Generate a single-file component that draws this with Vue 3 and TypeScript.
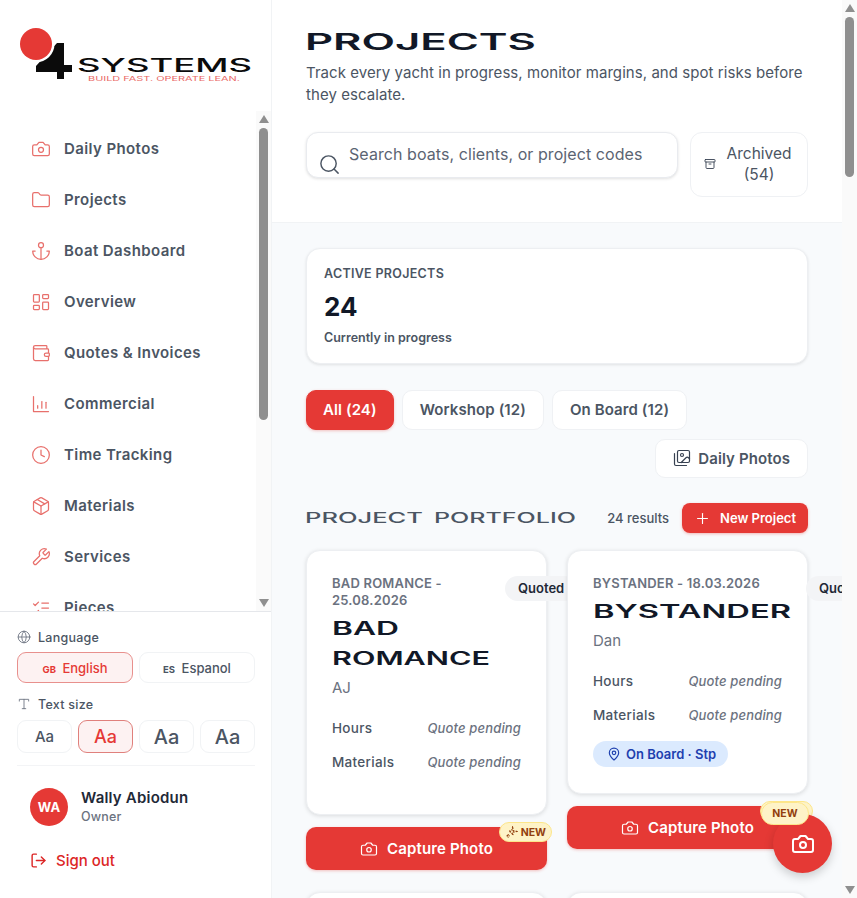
<template>
  <div class="app-shell">
    <aside class="sidebar">
      <div class="logo">
        <svg width="240" height="64" viewBox="0 0 240 64">
          <path d="M41 17h7v22h8v7h-8v7h-7v-7H20v-6z" fill="#0b0b0b" />
          <circle cx="20" cy="18" r="18.5" fill="#fff" />
          <circle cx="20" cy="18" r="16" fill="#e53935" />
          <text x="61" y="46" class="logo-name" textLength="175" lengthAdjust="spacingAndGlyphs">SYSTEMS</text>
          <text x="72" y="55" class="logo-tag" textLength="152" lengthAdjust="spacingAndGlyphs">BUILD FAST. OPERATE LEAN.</text>
        </svg>
      </div>

      <div class="nav-wrap">
        <nav class="nav">
          <a v-for="item in navItems" :key="item.label" class="nav-item">
            <svg class="nav-icon" viewBox="0 0 24 24" v-html="icons[item.icon]"></svg>
            <span>{{ item.label }}</span>
          </a>
        </nav>
        <div class="scrollbar">
          <i class="sb-up"></i>
          <div class="sb-thumb" :style="{ height: navThumb + 'px' }"></div>
          <div class="sb-rest"></div>
          <i class="sb-down"></i>
        </div>
      </div>

      <div class="side-footer">
        <div class="pref-label">
          <svg class="pref-icon" viewBox="0 0 24 24" v-html="icons.globe"></svg>
          Language
        </div>
        <div class="lang-row">
          <button class="lang-btn active"><small>GB</small> English</button>
          <button class="lang-btn"><small>ES</small> Espanol</button>
        </div>
        <div class="pref-label size-label">
          <svg class="pref-icon" viewBox="0 0 24 24" v-html="icons.type"></svg>
          Text size
        </div>
        <div class="size-row">
          <button
            v-for="(size, i) in textSizes"
            :key="size + '-' + i"
            class="size-btn"
            :class="{ active: i === 1 }"
            :style="{ fontSize: size + 'px' }"
          >
            Aa
          </button>
        </div>
        <div class="user-row">
          <div class="avatar">WA</div>
          <div>
            <div class="user-name">Wally Abiodun</div>
            <div class="user-role">Owner</div>
          </div>
        </div>
        <a class="sign-out">
          <svg class="signout-icon" viewBox="0 0 24 24" v-html="icons.logout"></svg>
          Sign out
        </a>
      </div>
    </aside>

    <div class="main-wrap">
      <main class="main">
        <header class="page-head">
          <h1 class="page-title">
            <svg width="232" height="20" viewBox="0 0 232 20">
              <text x="0" y="17.5" textLength="231" lengthAdjust="spacingAndGlyphs">PROJECTS</text>
            </svg>
          </h1>
          <p class="page-sub">Track every yacht in progress, monitor margins, and spot risks before they escalate.</p>
          <div class="search-row">
            <label class="search">
              <svg class="search-icon" viewBox="0 0 24 24" v-html="icons.search"></svg>
              <input type="text" placeholder="Search boats, clients, or project codes" />
            </label>
            <button class="archived">
              <svg class="archive-icon" viewBox="0 0 24 24" v-html="icons.archive"></svg>
              <span>Archived (54)</span>
            </button>
          </div>
        </header>

        <div class="content">
          <section class="stat-card">
            <div class="stat-label">ACTIVE PROJECTS</div>
            <div class="stat-value">24</div>
            <div class="stat-note">Currently in progress</div>
          </section>

          <div class="filters">
            <button class="chip active">All (24)</button>
            <button class="chip">Workshop (12)</button>
            <button class="chip">On Board (12)</button>
            <button class="chip photos-chip">
              <svg class="chip-icon" viewBox="0 0 24 24" v-html="icons.images"></svg>
              Daily Photos
            </button>
          </div>

          <div class="section-head">
            <h2 class="section-title">
              <svg width="272" height="14" viewBox="0 0 272 14">
                <text x="0" y="12" textLength="118" lengthAdjust="spacingAndGlyphs">PROJECT</text>
                <text x="129" y="12" textLength="142" lengthAdjust="spacingAndGlyphs">PORTFOLIO</text>
              </svg>
            </h2>
            <div class="section-actions">
              <span class="results">24 results</span>
              <button class="new-btn">
                <svg class="plus-icon" viewBox="0 0 24 24" v-html="icons.plus"></svg>
                New Project
              </button>
            </div>
          </div>

          <div class="grid">
            <div v-for="p in projects" :key="p.code" class="grid-cell">
              <article class="card">
                <div class="card-top">
                  <div>
                    <div class="card-code">{{ p.code }}</div>
                    <h3 class="card-title">
                      <svg
                        v-for="line in p.title"
                        :key="line.text"
                        class="title-line"
                        :width="line.width"
                        height="15"
                        :viewBox="`0 0 ${line.width} 15`"
                      >
                        <text x="0" y="14" :textLength="line.width" lengthAdjust="spacingAndGlyphs">{{ line.text }}</text>
                      </svg>
                    </h3>
                  </div>
                  <span class="status">Quoted</span>
                </div>
                <div class="client">{{ p.client }}</div>
                <div class="metrics">
                  <div class="metric"><span>Hours</span><em>Quote pending</em></div>
                  <div class="metric"><span>Materials</span><em>Quote pending</em></div>
                </div>
                <span v-if="p.place" class="place">
                  <svg class="place-icon" viewBox="0 0 24 24" v-html="icons.pin"></svg>
                  {{ p.place }}
                </span>
              </article>
              <div class="capture-wrap">
                <button class="capture">
                  <svg class="capture-icon" viewBox="0 0 24 24" v-html="icons.camera"></svg>
                  Capture Photo
                </button>
                <span class="new-badge">
                  <svg class="spark" viewBox="0 0 24 24" v-html="icons.sparkle"></svg>
                  NEW
                </span>
              </div>
            </div>
            <!-- next row, only its top edge is on screen -->
            <div class="card card-stub"></div>
            <div class="card card-stub"></div>
          </div>
        </div>
      </main>
      <div class="scrollbar">
        <i class="sb-up"></i>
        <div class="sb-thumb" :style="{ height: mainThumb + 'px' }"></div>
        <div class="sb-rest"></div>
        <i class="sb-down"></i>
      </div>
    </div>

    <button class="fab" aria-label="Capture photo">
      <svg class="fab-icon" viewBox="0 0 24 24" v-html="icons.camera"></svg>
      <span class="fab-badge">NEW</span>
    </button>
  </div>
</template>

<script setup lang="ts">
interface TitleLine {
  text: string
  width: number
}

interface Project {
  code: string
  title: TitleLine[]
  client: string
  place?: string
}

const icons: Record<string, string> = {
  camera: '<path d="M14.5 4h-5L7 7H4a2 2 0 0 0-2 2v9a2 2 0 0 0 2 2h16a2 2 0 0 0 2-2V9a2 2 0 0 0-2-2h-3l-2.5-3z"/><circle cx="12" cy="13" r="3"/>',
  folder: '<path d="M20 20a2 2 0 0 0 2-2V8a2 2 0 0 0-2-2h-7.9a2 2 0 0 1-1.69-.9L9.6 3.9A2 2 0 0 0 7.93 3H4a2 2 0 0 0-2 2v13a2 2 0 0 0 2 2Z"/>',
  anchor: '<path d="M12 22V8"/><path d="M5 12H2a10 10 0 0 0 20 0h-3"/><circle cx="12" cy="5" r="3"/>',
  dashboard: '<rect x="3" y="3" width="7" height="9" rx="1"/><rect x="14" y="3" width="7" height="5" rx="1"/><rect x="14" y="12" width="7" height="9" rx="1"/><rect x="3" y="16" width="7" height="5" rx="1"/>',
  wallet: '<path d="M19 7V4a1 1 0 0 0-1-1H5a2 2 0 0 0 0 4h15a1 1 0 0 1 1 1v4h-3a2 2 0 0 0 0 4h3a1 1 0 0 0 1-1v-2a1 1 0 0 0-1-1"/><path d="M3 5v14a2 2 0 0 0 2 2h15a1 1 0 0 0 1-1v-4"/>',
  chart: '<path d="M3 3v18h18"/><path d="M18 17v-7"/><path d="M13 17V9"/><path d="M8 17v-3"/>',
  clock: '<circle cx="12" cy="12" r="10"/><polyline points="12 6 12 12 16 14"/>',
  box: '<path d="m7.5 4.27 9 5.15"/><path d="M21 8a2 2 0 0 0-1-1.73l-7-4a2 2 0 0 0-2 0l-7 4A2 2 0 0 0 3 8v8a2 2 0 0 0 1 1.73l7 4a2 2 0 0 0 2 0l7-4A2 2 0 0 0 21 16Z"/><path d="m3.3 7 8.7 5 8.7-5"/><path d="M12 22V12"/>',
  wrench: '<path d="M14.7 6.3a1 1 0 0 0 0 1.4l1.6 1.6a1 1 0 0 0 1.4 0l3.77-3.77a6 6 0 0 1-7.94 7.94l-6.91 6.91a2.12 2.12 0 0 1-3-3l6.91-6.91a6 6 0 0 1 7.94-7.94l-3.76 3.76z"/>',
  checks: '<path d="m3 17 2 2 4-4"/><path d="m3 7 2 2 4-4"/><path d="M13 6h8"/><path d="M13 12h8"/><path d="M13 18h8"/>',
  globe: '<circle cx="12" cy="12" r="10"/><path d="M12 2a14.5 14.5 0 0 0 0 20 14.5 14.5 0 0 0 0-20"/><path d="M2 12h20"/>',
  type: '<polyline points="4 7 4 4 20 4 20 7"/><line x1="9" y1="20" x2="15" y2="20"/><line x1="12" y1="4" x2="12" y2="20"/>',
  logout: '<path d="M9 21H5a2 2 0 0 1-2-2V5a2 2 0 0 1 2-2h4"/><polyline points="16 17 21 12 16 7"/><line x1="21" y1="12" x2="9" y2="12"/>',
  search: '<circle cx="11" cy="11" r="8"/><path d="m21 21-4.3-4.3"/>',
  archive: '<rect x="2" y="3" width="20" height="5" rx="1"/><path d="M4 8v11a2 2 0 0 0 2 2h12a2 2 0 0 0 2-2V8"/><path d="M10 12h4"/>',
  images: '<path d="M18 22H4a2 2 0 0 1-2-2V6"/><path d="m22 13-1.296-1.296a2.41 2.41 0 0 0-3.408 0L11 18"/><circle cx="12" cy="8" r="2"/><rect x="6" y="2" width="16" height="16" rx="2"/>',
  plus: '<path d="M5 12h14"/><path d="M12 5v14"/>',
  pin: '<path d="M20 10c0 4.993-5.539 10.193-7.399 11.799a1 1 0 0 1-1.202 0C9.539 20.193 4 14.993 4 10a8 8 0 0 1 16 0"/><circle cx="12" cy="10" r="3"/>',
  sparkle: '<path d="M14 3l1.5 5.5L21 10l-5.5 1.5L14 17l-1.5-5.5L7 10l5.5-1.5z"/><path d="M6 15v6"/><path d="M3 18h6"/>',
}

const navItems = [
  { label: 'Daily Photos', icon: 'camera' },
  { label: 'Projects', icon: 'folder' },
  { label: 'Boat Dashboard', icon: 'anchor' },
  { label: 'Overview', icon: 'dashboard' },
  { label: 'Quotes & Invoices', icon: 'wallet' },
  { label: 'Commercial', icon: 'chart' },
  { label: 'Time Tracking', icon: 'clock' },
  { label: 'Materials', icon: 'box' },
  { label: 'Services', icon: 'wrench' },
  { label: 'Pieces', icon: 'checks' },
]

const textSizes = [15, 18, 20, 20]

// thumb sizes for the drawn scrollbars
const navThumb = 292
const mainThumb = 160

const projects: Project[] = [
  {
    code: 'BAD ROMANCE - 25.08.2026',
    title: [
      { text: 'BAD', width: 67 },
      { text: 'ROMANCE', width: 158 },
    ],
    client: 'AJ',
  },
  {
    code: 'BYSTANDER - 18.03.2026',
    title: [{ text: 'BYSTANDER', width: 198 }],
    client: 'Dan',
    place: 'On Board · Stp',
  },
]
</script>

<style scoped>
.app-shell {
  display: flex;
  height: 100vh;
  font-family: Inter, "Liberation Sans", sans-serif;
  color: #374151;
  overflow: hidden;
}

button {
  font-family: inherit;
  cursor: pointer;
}

svg {
  flex-shrink: 0;
}

/* drawn scrollbars, the headless browser hides real ones */
.scrollbar {
  width: 15px;
  flex-shrink: 0;
  display: flex;
  flex-direction: column;
  align-items: center;
  background: #fafafa;
}

.sb-up,
.sb-down {
  display: block;
  width: 0;
  height: 0;
  flex-shrink: 0;
  border-left: 5px solid transparent;
  border-right: 5px solid transparent;
}

.sb-up {
  margin: 4px 0 5px;
  border-bottom: 8px solid #8f8f8f;
}

.sb-down {
  margin: 5px 0 4px;
  border-top: 8px solid #8f8f8f;
}

.sb-thumb {
  width: 9px;
  flex-shrink: 0;
  background: #8f8f8f;
  border-radius: 5px;
}

.sb-rest {
  flex: 1;
}

/* sidebar */
.sidebar {
  width: 272px;
  flex-shrink: 0;
  display: flex;
  flex-direction: column;
  background: #fff;
  border-right: 1px solid #f1f3f5;
  box-sizing: border-box;
}

.logo {
  height: 111px;
  flex-shrink: 0;
  padding: 26px 0 0 16px;
  box-sizing: border-box;
}

.logo-name {
  font-family: Inter, sans-serif;
  font-size: 18px;
  font-weight: 500;
  fill: #0b0b0b;
}

.logo-tag {
  font-family: Inter, sans-serif;
  font-size: 6.5px;
  font-weight: 400;
  fill: #ea6a66;
}

.nav-wrap {
  flex: 1;
  min-height: 0;
  display: flex;
}

.nav {
  flex: 1;
  min-width: 0;
  overflow: hidden;
  padding-top: 12px;
}

.nav-item {
  display: flex;
  align-items: center;
  gap: 13px;
  height: 51px;
  padding-left: 31px;
  font-size: 15px;
  font-weight: 600;
  letter-spacing: 0.4px;
  color: #4b5563;
}

.nav-icon {
  width: 20px;
  height: 20px;
  fill: none;
  stroke: #e8706c;
  stroke-width: 1.5;
  stroke-linecap: round;
  stroke-linejoin: round;
}

.side-footer {
  flex-shrink: 0;
  height: 287px;
  box-sizing: border-box;
  border-top: 1px solid #e5e7eb;
  padding: 17px 16px 0 17px;
}

.pref-label {
  display: flex;
  align-items: center;
  gap: 7px;
  height: 16px;
  font-size: 12.5px;
  font-weight: 500;
  letter-spacing: 0.25px;
  color: #4b5563;
}

.size-label {
  margin-top: 13px;
}

.pref-icon {
  width: 14px;
  height: 14px;
  fill: none;
  stroke: #6b7280;
  stroke-width: 1.5;
  stroke-linecap: round;
  stroke-linejoin: round;
}

.lang-row {
  display: grid;
  grid-template-columns: 1fr 1fr;
  gap: 6px;
  margin-top: 7px;
}

.lang-btn {
  height: 31px;
  background: #fff;
  border: 1px solid #f1f3f5;
  border-radius: 9px;
  font-size: 13px;
  font-weight: 500;
  color: #4b5563;
}

.lang-btn small {
  font-size: 9.5px;
  font-weight: 700;
  margin-right: 3px;
}

.lang-btn.active {
  background: #fdf2f2;
  border-color: #e8908d;
  color: #e53935;
}

.size-row {
  display: grid;
  grid-template-columns: repeat(4, 1fr);
  gap: 6px;
  margin-top: 8px;
}

.size-btn {
  height: 33px;
  padding: 0;
  background: #fff;
  border: 1px solid #f1f3f5;
  border-radius: 9px;
  font-weight: 500;
  color: #4b5563;
}

.size-btn.active {
  background: #fdf2f2;
  border-color: #e0807c;
  color: #e53935;
}

.user-row {
  display: flex;
  align-items: center;
  gap: 13px;
  margin-top: 12px;
  padding: 22px 0 0 13px;
  border-top: 1px solid #f3f4f6;
}

.avatar {
  width: 38px;
  height: 38px;
  border-radius: 50%;
  background: #e53935;
  color: #fff;
  display: flex;
  align-items: center;
  justify-content: center;
  font-size: 13px;
  font-weight: 700;
}

.user-name {
  font-size: 15px;
  font-weight: 600;
  line-height: 20px;
  letter-spacing: 0.2px;
  color: #1f2937;
}

.user-role {
  font-size: 12.5px;
  font-weight: 500;
  line-height: 18px;
  letter-spacing: 0.2px;
  color: #6b7280;
}

.sign-out {
  display: flex;
  align-items: center;
  gap: 9px;
  margin: 25px 0 0 13px;
  font-size: 15px;
  font-weight: 500;
  color: #dc2626;
}

.signout-icon {
  width: 17px;
  height: 17px;
  fill: none;
  stroke: #dc2626;
  stroke-width: 2;
  stroke-linecap: round;
  stroke-linejoin: round;
}

/* main column */
.main-wrap {
  flex: 1;
  min-width: 0;
  display: flex;
}

.main {
  flex: 1;
  min-width: 0;
  overflow: hidden;
  background: #f8fafc;
}

.page-head {
  background: #fff;
  border-bottom: 1px solid #f1f3f5;
  padding: 32px 34px 25px;
}

.page-title {
  margin: 0 0 0 -1px;
  height: 20px;
  line-height: 0;
}

.page-title text {
  font-family: Inter, sans-serif;
  font-size: 23px;
  font-weight: 600;
  fill: #111827;
}

.page-sub {
  margin: 10px 0 0;
  font-size: 15px;
  line-height: 22px;
  letter-spacing: 0.06px;
  color: #4b5563;
}

.search-row {
  display: flex;
  align-items: flex-start;
  gap: 12px;
  margin-top: 26px;
}

.search {
  flex: 1;
  display: flex;
  height: 46px;
  box-sizing: border-box;
  background: #fff;
  border: 1px solid #e9ebef;
  border-radius: 12px;
  box-shadow: 0 1px 3px rgba(0, 0, 0, 0.12);
  padding-left: 11px;
}

.search-icon {
  width: 23px;
  height: 23px;
  margin-top: 20px;
  fill: none;
  stroke: #4b5563;
  stroke-width: 1.5;
  stroke-linecap: round;
  stroke-linejoin: round;
}

.search input {
  flex: 1;
  min-width: 0;
  border: 0;
  outline: 0;
  background: transparent;
  padding: 0 0 2px 8px;
  font-family: inherit;
  font-size: 16px;
  letter-spacing: 0.07px;
  color: #374151;
}

.search input::placeholder {
  color: #5b6472;
  opacity: 1;
}

.archived {
  width: 118px;
  height: 65px;
  flex-shrink: 0;
  display: flex;
  align-items: center;
  gap: 8px;
  padding: 0 13px 2px;
  background: #fff;
  border: 1px solid #eff1f4;
  border-radius: 12px;
  font-size: 15.5px;
  line-height: 21px;
  color: #4b5563;
}

.archive-icon {
  width: 12px;
  height: 12px;
  fill: none;
  stroke: #374151;
  stroke-width: 1.8;
  stroke-linecap: round;
  stroke-linejoin: round;
}

.archived span {
  flex: 1;
  text-align: center;
}

.content {
  padding: 25px 34px 0;
}

.stat-card {
  height: 116px;
  box-sizing: border-box;
  background: #fff;
  border: 1px solid #edeff2;
  border-radius: 14px;
  box-shadow: 0 1px 3px rgba(0, 0, 0, 0.1);
  padding: 17px 17px 15px;
}

.stat-label {
  font-size: 12.5px;
  font-weight: 600;
  line-height: 16px;
  letter-spacing: 0.3px;
  color: #4b5563;
}

.stat-value {
  margin-top: 8px;
  font-size: 26px;
  font-weight: 700;
  line-height: 34px;
  color: #111827;
}

.stat-note {
  margin-top: 6px;
  font-size: 12.5px;
  font-weight: 600;
  line-height: 16px;
  color: #4b5563;
}

.filters {
  display: flex;
  flex-wrap: wrap;
  gap: 9px 8px;
  margin-top: 26px;
}

.chip {
  height: 39.5px;
  padding: 0 17px;
  background: #fff;
  border: 1px solid #eff1f4;
  border-radius: 10px;
  font-size: 15px;
  font-weight: 600;
  letter-spacing: 0.1px;
  color: #4b5563;
}

.chip.active {
  padding: 0 16px;
  background: #e53935;
  border-color: #e53935;
  color: #fff;
  box-shadow: 0 1px 3px rgba(229, 57, 53, 0.3);
}

.photos-chip {
  display: flex;
  align-items: center;
  gap: 7px;
  margin-left: auto;
}

.chip-icon {
  width: 18px;
  height: 18px;
  fill: none;
  stroke: #374151;
  stroke-width: 1.6;
  stroke-linecap: round;
  stroke-linejoin: round;
}

.section-head {
  display: flex;
  align-items: center;
  justify-content: space-between;
  margin-top: 25px;
  height: 30px;
}

.section-title {
  margin: 0 0 0 -1px;
  line-height: 0;
}

.section-title text {
  font-family: Inter, sans-serif;
  font-size: 14px;
  font-weight: 500;
  fill: #4b5563;
}

.section-actions {
  display: flex;
  align-items: center;
  gap: 13px;
}

.results {
  font-size: 13px;
  font-weight: 500;
  color: #4b5563;
}

.new-btn {
  display: flex;
  align-items: center;
  gap: 9px;
  height: 30px;
  padding: 0 12px;
  background: #e53935;
  border: 0;
  border-radius: 8px;
  box-shadow: 0 1px 3px rgba(229, 57, 53, 0.35);
  color: #fff;
  font-size: 13px;
  font-weight: 600;
}

.plus-icon {
  width: 17px;
  height: 17px;
  fill: none;
  stroke: #fff;
  stroke-width: 1.6;
  stroke-linecap: round;
}

.grid {
  display: grid;
  grid-template-columns: 1fr 1fr;
  gap: 22px 20px;
  margin-top: 17px;
  align-items: start;
}

.grid-cell {
  min-width: 0;
}

.card {
  position: relative;
  box-sizing: border-box;
  background: #fff;
  border: 1px solid #edeff2;
  border-radius: 14px;
  box-shadow: 0 1px 4px rgba(0, 0, 0, 0.12);
  padding: 24px 25px 26px;
}

.card-stub {
  height: 200px;
}

.card-top {
  display: flex;
  gap: 15px;
}

.card-code {
  font-size: 13px;
  font-weight: 600;
  line-height: 17px;
  letter-spacing: 0.2px;
  color: #6b7280;
}

.card-title {
  margin: 0;
  padding-top: 12px;
  line-height: 0;
}

.title-line {
  display: block;
  margin-bottom: 15px;
}

.title-line:last-child {
  margin-bottom: 0;
}

.title-line text {
  font-family: Inter, sans-serif;
  font-size: 18px;
  font-weight: 600;
  fill: #111827;
}

.status {
  flex-shrink: 0;
  align-self: flex-start;
  height: 25px;
  line-height: 25px;
  margin-top: 1px;
  padding: 0 13px;
  background: #f3f4f6;
  border-radius: 13px;
  font-size: 13px;
  font-weight: 600;
  color: #1f2937;
}

.client {
  margin-top: 12px;
  font-size: 15px;
  line-height: 20px;
  color: #6b7280;
}

.metrics {
  margin: 13px 0 9px;
}

.metric {
  display: flex;
  justify-content: space-between;
  align-items: center;
  height: 34px;
  font-size: 13.5px;
  font-weight: 500;
  letter-spacing: 0.3px;
  color: #4b5563;
}

.metric em {
  font-size: 13px;
  letter-spacing: 0.15px;
  color: #6b7280;
}

.place {
  display: inline-flex;
  align-items: center;
  gap: 5px;
  height: 26px;
  vertical-align: top;
  padding: 0 12px 0 14px;
  background: #dbeafe;
  border-radius: 13px;
  font-size: 13px;
  font-weight: 600;
  color: #1e40af;
}

.place-icon {
  width: 14px;
  height: 14px;
  fill: none;
  stroke: #1e40af;
  stroke-width: 2;
  stroke-linejoin: round;
}

.capture-wrap {
  position: relative;
  margin-top: 12px;
}

.capture {
  width: 100%;
  height: 43px;
  display: flex;
  align-items: center;
  justify-content: center;
  gap: 9px;
  background: #e53935;
  border: 0;
  border-radius: 10px;
  box-shadow: 0 1px 3px rgba(229, 57, 53, 0.3);
  color: #fff;
  font-size: 15px;
  font-weight: 600;
  letter-spacing: 0.15px;
}

.capture-icon {
  width: 18px;
  height: 18px;
  fill: none;
  stroke: #fff;
  stroke-width: 1.6;
  stroke-linecap: round;
  stroke-linejoin: round;
}

.new-badge {
  position: absolute;
  top: -5px;
  right: -5px;
  display: flex;
  align-items: center;
  gap: 3px;
  height: 20px;
  padding: 0 5px;
  box-sizing: border-box;
  background: #fef3c7;
  border: 1px solid #fde68a;
  border-radius: 10px;
  font-size: 10.5px;
  font-weight: 700;
  color: #92400e;
}

.spark {
  width: 13px;
  height: 13px;
  fill: none;
  stroke: #92400e;
  stroke-width: 2.6;
  stroke-dasharray: 2.5 2.5;
}

.fab {
  position: fixed;
  left: 773px;
  top: 814px;
  width: 59px;
  height: 59px;
  padding: 0;
  border: 0;
  border-radius: 50%;
  background: #e53935;
  box-shadow: 0 4px 10px rgba(0, 0, 0, 0.18);
  display: flex;
  align-items: center;
  justify-content: center;
}

.fab-icon {
  width: 24px;
  height: 24px;
  margin-top: 1px;
  fill: none;
  stroke: #fff;
  stroke-width: 2;
  stroke-linecap: round;
  stroke-linejoin: round;
}

.fab-badge {
  position: absolute;
  top: -12px;
  left: -12px;
  width: 48px;
  height: 23px;
  line-height: 21px;
  box-sizing: border-box;
  text-align: center;
  background: #fef3c7;
  border: 1px solid #fde68a;
  border-radius: 12px;
  font-family: Inter, sans-serif;
  font-size: 10.5px;
  font-weight: 700;
  color: #92400e;
}
</style>
